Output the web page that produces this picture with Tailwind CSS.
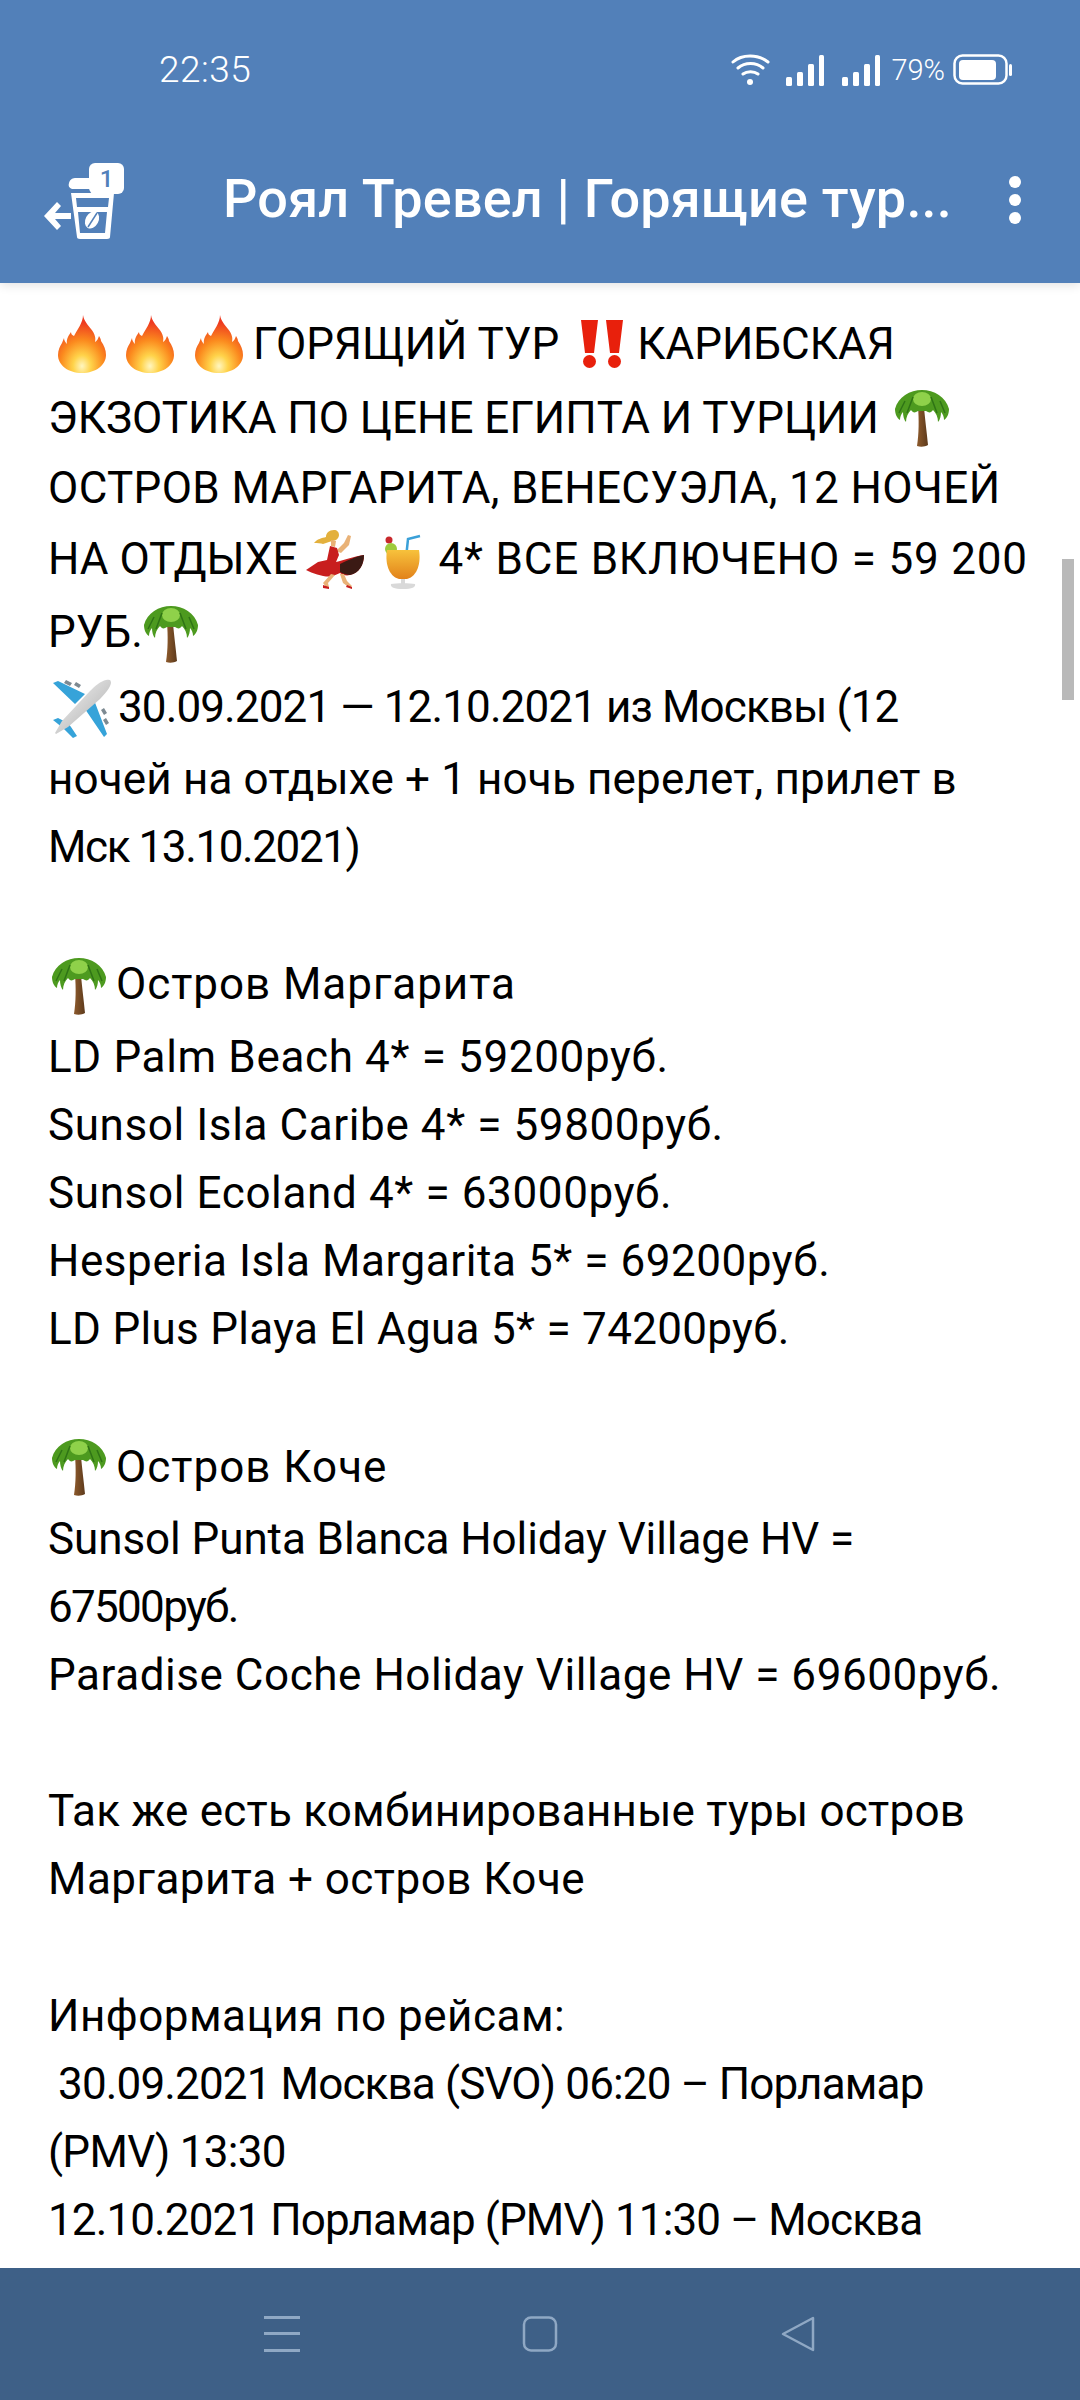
<!DOCTYPE html>
<html lang="ru">
<head>
    <meta charset="UTF-8">
    <meta name="viewport" content="width=device-width, initial-scale=1.0">
    <title>Роял Тревел</title>
    <script src="https://cdn.jsdelivr.net/npm/@tailwindcss/browser@4"></script>
</head>
<body class="bg-white">
    <!-- emoji set -->
    <svg class="absolute w-0 h-0" width="0" height="0">
        <defs>
            <radialGradient id="fireGrad" cx="50%" cy="88%" r="75%">
                <stop offset="0" stop-color="#fff6c0"/>
                <stop offset="0.25" stop-color="#ffd34a"/>
                <stop offset="0.6" stop-color="#fb8a1e"/>
                <stop offset="1" stop-color="#ee3a20"/>
            </radialGradient>
            <linearGradient id="drinkGrad" x1="0" y1="0" x2="0" y2="1">
                <stop offset="0" stop-color="#f7c23c"/>
                <stop offset="1" stop-color="#e2821a"/>
            </linearGradient>
            <linearGradient id="trunkGrad" x1="0" y1="0" x2="1" y2="0">
                <stop offset="0" stop-color="#8d5a2c"/>
                <stop offset="1" stop-color="#5d3a1c"/>
            </linearGradient>
            <linearGradient id="hullGrad" x1="0" y1="0" x2="1" y2="1">
                <stop offset="0" stop-color="#f8f8f8"/>
                <stop offset="1" stop-color="#a9a9a9"/>
            </linearGradient>
            <symbol id="fire" viewBox="0 0 48 58">
                <path fill="url(#fireGrad)" d="M25 0c1 6 5 10 8 14 4 5 5 9 4 13 2-1 3-3 4-6 1 2 2 3 2 5 3 4 5 9 5 14 0 10-10 18-24 18S0 50 0 40c0-5 2-9 4-12l2-5c0 2 1 4 3 6-1-5 2-9 4-12 0 2 1 3 3 4 3-6 9-13 9-21z"/>
            </symbol>
            <symbol id="palm" viewBox="0 0 56 58">
                <path fill="url(#trunkGrad)" d="M24 18h6c1 12 3 27 4 38-3 2-8 2-11 1 2-12 2-27 1-39z"/>
                <path fill="#4d9a1f" d="M28 1C16 1 4 8 1 20c0 5 2 9 5 11 0-3 1-6 3-8 0 4 1 8 3 10 0-5 2-9 5-12 2 3 4 3 7 1l8 0c3 2 5 2 7-1 3 3 5 7 5 12 2-2 3-6 3-10 2 2 3 5 3 8 3-2 5-6 5-11C52 8 40 1 28 1z"/>
                <ellipse fill="#8fd14a" cx="28" cy="10" rx="9" ry="7"/>
                <path fill="none" d="M11 12 5 24M19 8l-6 16M37 8l6 16M46 12l5 12" stroke="#2f7415" stroke-width="1.500"/>
            </symbol>
            <symbol id="plane" viewBox="0 0 60 60">
                <path fill="#36a3d9" d="M1 5l5-2 27 13-10 10zM1 42l5-2 10 5 3 4 2 3 4 6-4 2-10-10zM33 31l9-9 13 34-3 3z"/>
                <path fill="#7d8a92" d="M14 2l6 3-2 3-6-3zM24 4l5 3-2 3-5-3zM52 30l3 5-3 2-3-5zM54 40l3 5-3 2-3-5z"/>
                <path fill="url(#hullGrad)" d="M54 2c4-1 5 0 5 3-1 5-6 11-11 16L16 49 4 56l-1-1 7-12L38 13C43 8 49 3 54 2z"/>
            </symbol>
            <symbol id="dancer" viewBox="0 0 58 60">
                <path fill="#e3b03c" d="M28 0c-5 0-8 3-8 7-4 1-9 2-12 6 3 0 7 0 9 1l9-3c4 0 7-3 7-6s-2-5-5-5z"/>
                <path fill="#e9b277" d="M42 5l3 1-2 9-8 8-5-2 8-8zM25 10l5 1-1 6-4-1z"/>
                <path fill="#c81e1e" d="M24 16l7 2 2 7-3 7c8-2 19-6 28-7 0 10-5 18-14 20-4 1-7 0-10-2l-7 3C20 48 8 44 0 40l12-8 9-2z"/>
                <path fill="#3b1a14" d="M34 34c8-4 17-8 24-9 0 10-5 18-14 20-3 0-7-1-10-3z"/>
                <path fill="#e9b277" d="M25 44l4 1-7 8 1 4-3 0-3-4zM34 44l4 0 3 7 5 5-2 2-7-5z"/>
                <path fill="#c81e1e" d="M17 55l6 2 0 2-6-1zM41 55l5 2 0 2-6-2z"/>
            </symbol>
            <symbol id="cocktail" viewBox="0 0 38 58">
                <path fill="none" stroke="#3aa0d8" stroke-width="2.500" d="M22 26 24 7l12-3"/>
                <circle fill="#c8282c" cx="5" cy="8" r="3.500"/>
                <circle fill="#9ecb3c" cx="7" cy="17" r="6"/>
                <path fill="url(#drinkGrad)" d="M3 18h32c2 12-1 26-12 29h-8C4 44 1 30 3 18z"/>
                <path fill="#d9d9d9" d="M17 47h4v5h-4zM7 52c5-1 19-1 24 0 1 3-3 5-12 5S6 55 7 52z"/>
            </symbol>
            <symbol id="bangbang" viewBox="0 0 42 48">
                <path fill="#e8200c" d="M0 0h17l-4 33H4zM25 0h17l-4 33h-9z"/>
                <circle fill="#e8200c" cx="8.500" cy="41.500" r="6.500"/>
                <circle fill="#e8200c" cx="33.500" cy="41.500" r="6.500"/>
            </symbol>
        </defs>
    </svg>

    <div class="w-[1080px] h-[2400px] relative flex flex-col overflow-hidden font-['Roboto',sans-serif]">
        <!-- status bar + app bar -->
        <header class="h-[283px] shrink-0 bg-[#5280b9] text-white relative z-10 shadow-[0_2px_10px_rgba(0,0,0,0.12)]">
            <div class="h-[143px] pt-[49px] pl-[159px] pr-[68px] flex items-start justify-between">
                <span class="text-[37px] leading-[42px] font-light tracking-[0.5px]">22:35</span>
                <div class="flex items-center h-[36px] mt-[3px]">
                    <svg class="w-[40px] h-[32px]" viewBox="0 0 40 32" fill="none" stroke="white" stroke-width="3" stroke-linecap="round">
                        <path d="M2 8C11 0 27 0 37 8M7 14c7-6 18-6 25 0M12 20c4-3 11-3 15 0"/>
                        <circle cx="19" cy="28" r="3" fill="white" stroke="none"/>
                    </svg>
                    <svg class="ml-[15px] w-[39px] h-[32px]" viewBox="0 0 39 32" fill="white">
                        <rect x="0" y="23" width="6" height="9" rx="1.500"/><rect x="11" y="18" width="6" height="14" rx="1.500"/><rect x="22" y="10" width="6" height="22" rx="1.500"/><rect x="33" y="1" width="5" height="31" rx="1.500"/>
                    </svg>
                    <svg class="ml-[17px] w-[39px] h-[32px]" viewBox="0 0 39 32" fill="white">
                        <rect x="0" y="23" width="6" height="9" rx="1.500"/><rect x="11" y="18" width="6" height="14" rx="1.500"/><rect x="22" y="10" width="6" height="22" rx="1.500"/><rect x="33" y="1" width="5" height="31" rx="1.500"/>
                    </svg>
                    <span class="ml-[10px] text-[29px] leading-[32px] font-light">79%</span>
                    <svg class="ml-[8px] w-[59px] h-[32px]" viewBox="0 0 59 32" fill="none">
                        <rect x="1.500" y="1.500" width="52" height="28" rx="8" stroke="white" stroke-width="2.500"/>
                        <rect x="6" y="6" width="37" height="20" rx="4" fill="white"/>
                        <rect x="56" y="10" width="3" height="12" rx="1.500" fill="white"/>
                    </svg>
                </div>
            </div>
            <div class="h-[140px] flex items-center relative">
                <!-- back + cup -->
                <div class="absolute left-[43px] top-[20px] w-[82px] h-[76px]">
                    <svg class="w-[82px] h-[76px]" viewBox="0 0 82 76" fill="white">
                        <path d="M1 53l13-14 4 4-6 7h16v6H12l6 7-4 4z"/>
                        <path d="M29 26c-3-1-4-3-3-6 1-4 4-5 7-5h14v11z"/>
                        <path fill-rule="evenodd" d="M28 30h43l-4 44c0 1-1 2-3 2H37c-2 0-3-1-3-2zm5 5 1 9h31l1-9zm2 14 2 21h25l2-21z"/>
                        <ellipse cx="49" cy="57" rx="6.500" ry="9" transform="rotate(28 49 57)"/>
                        <path d="M45 64 54 50" stroke="#5280b9" stroke-width="1.500"/>
                    </svg>
                </div>
                <div class="absolute left-[89px] top-[20px] w-[35px] h-[31px] bg-white rounded-[6px] flex items-center justify-center text-[#5280b9] text-[24px] leading-none font-medium">1</div>
                <h1 class="ml-[223px] w-[730px] text-[54px] leading-[70px] font-medium tracking-[0.2px] text-white whitespace-nowrap mt-[-28px]">Роял Тревел | Горящие тур...</h1>
                <div class="absolute left-[1009px] top-[33px] flex flex-col gap-[6px]">
                    <span class="w-[12px] h-[12px] rounded-full bg-white"></span>
                    <span class="w-[12px] h-[12px] rounded-full bg-white"></span>
                    <span class="w-[12px] h-[12px] rounded-full bg-white"></span>
                </div>
            </div>
        </header>

        <!-- message text -->
        <main class="flex-1 overflow-hidden relative pl-[48px] pt-[27px] text-[44px] leading-[68px] text-black font-normal whitespace-nowrap">
            <div class="h-[74px] flex items-start"><svg class="w-[48px] h-[58px] ml-[10px] mt-[5px]"><use href="#fire"/></svg><svg class="w-[48px] h-[58px] ml-[20px] mt-[5px]"><use href="#fire"/></svg><svg class="w-[48px] h-[58px] ml-[21px] mt-[5px]"><use href="#fire"/></svg><span class="ml-[10px]">ГОРЯЩИЙ ТУР</span><svg class="w-[42px] h-[48px] ml-[22px] mt-[10px]"><use href="#bangbang"/></svg><span class="ml-[14px]">КАРИБСКАЯ</span></div>
            <div class="h-[70px] flex items-start"><span>ЭКЗОТИКА ПО ЦЕНЕ ЕГИПТА И ТУРЦИИ</span><svg class="w-[56px] h-[58px] ml-[15px] mt-[5px]"><use href="#palm"/></svg></div>
            <div class="h-[71px] tracking-[0.36px]">ОСТРОВ МАРГАРИТА, ВЕНЕСУЭЛА, 12 НОЧЕЙ</div>
            <div class="h-[73px] flex items-start"><span>НА ОТДЫХЕ</span><svg class="w-[58px] h-[60px] ml-[9px] mt-[5px]"><use href="#dancer"/></svg><svg class="w-[38px] h-[58px] ml-[20px] mt-[7px]"><use href="#cocktail"/></svg><span class="ml-[16px] tracking-[0.8px]">4* ВСЕ ВКЛЮЧЕНО = 59 200</span></div>
            <div class="h-[75px] flex items-start"><span>РУБ.</span><svg class="w-[56px] h-[58px] mt-[7px]"><use href="#palm"/></svg></div>
            <div class="h-[72px] flex items-start"><svg class="w-[60px] h-[60px] ml-[4px] mt-[5px]"><use href="#plane"/></svg><span class="ml-[6px] tracking-[-0.88px]">30.09.2021 — 12.10.2021 из Москвы (12</span></div>
            <div class="h-[68px] tracking-[0.15px]">ночей на отдыхе + 1 ночь перелет, прилет в</div>
            <div class="h-[68px] tracking-[-1.4px]">Мск 13.10.2021)</div>
            <div class="h-[69px]"></div>
            <div class="h-[73px] flex items-start"><svg class="w-[56px] h-[58px] ml-[3px] mt-[7px]"><use href="#palm"/></svg><span class="ml-[9px] tracking-[0.95px]">Остров Маргарита</span></div>
            <div class="h-[68px] tracking-[0.65px]">LD Palm Beach 4* = 59200руб.</div>
            <div class="h-[68px] tracking-[0.6px]">Sunsol Isla Caribe 4* = 59800руб.</div>
            <div class="h-[68px] tracking-[0.63px]">Sunsol Ecoland 4* = 63000руб.</div>
            <div class="h-[68px] tracking-[0.56px]">Hesperia Isla Margarita 5* = 69200руб.</div>
            <div class="h-[68px] tracking-[0.3px]">LD Plus Playa El Agua 5* = 74200руб.</div>
            <div class="h-[70px]"></div>
            <div class="h-[72px] flex items-start"><svg class="w-[56px] h-[58px] ml-[3px] mt-[5px]"><use href="#palm"/></svg><span class="ml-[9px] tracking-[1px]">Остров Коче</span></div>
            <div class="h-[68px] tracking-[-0.08px]">Sunsol Punta Blanca Holiday Village HV =</div>
            <div class="h-[68px] tracking-[-1.7px]">67500руб.</div>
            <div class="h-[68px] tracking-[0.55px]">Paradise Coche Holiday Village HV = 69600руб.</div>
            <div class="h-[68px]"></div>
            <div class="h-[68px] tracking-[0.24px]">Так же есть комбинированные туры остров</div>
            <div class="h-[68px] tracking-[0.47px]">Маргарита + остров Коче</div>
            <div class="h-[69px]"></div>
            <div class="h-[68px] tracking-[0.5px]">Информация по рейсам:</div>
            <div class="h-[68px] pl-[10px] tracking-[-0.85px]">30.09.2021 Москва (SVO) 06:20 – Порламар</div>
            <div class="h-[68px] tracking-[-0.7px]">(PMV) 13:30</div>
            <div class="h-[72px] tracking-[-0.88px]">12.10.2021 Порламар (PMV) 11:30 – Москва</div>
            <div class="h-[68px]">(SVO)</div>
            <!-- scrollbar -->
            <div class="absolute left-[1062px] top-[276px] w-[12px] h-[141px] bg-[#b9b9b9]"></div>
        </main>

        <!-- system nav -->
        <nav class="h-[132px] shrink-0 bg-[#3e6087] flex items-start pt-[48px] pl-[264px]">
            <svg class="w-[36px] h-[36px]" viewBox="0 0 36 36" fill="#8fa8c4">
                <rect x="0" y="0" width="36" height="3"/><rect x="0" y="16" width="36" height="3"/><rect x="0" y="33" width="36" height="3"/>
            </svg>
            <svg class="w-[36px] h-[36px] ml-[222px]" viewBox="0 0 36 36" fill="none" stroke="#8fa8c4" stroke-width="2.500">
                <rect x="2" y="1.500" width="32" height="33" rx="7"/>
            </svg>
            <svg class="w-[36px] h-[36px] ml-[222px]" viewBox="0 0 36 36" fill="none" stroke="#8fa8c4" stroke-width="2.500" stroke-linejoin="round">
                <path d="M33 2v32L3 18z"/>
            </svg>
        </nav>
    </div>
</body>
</html>
